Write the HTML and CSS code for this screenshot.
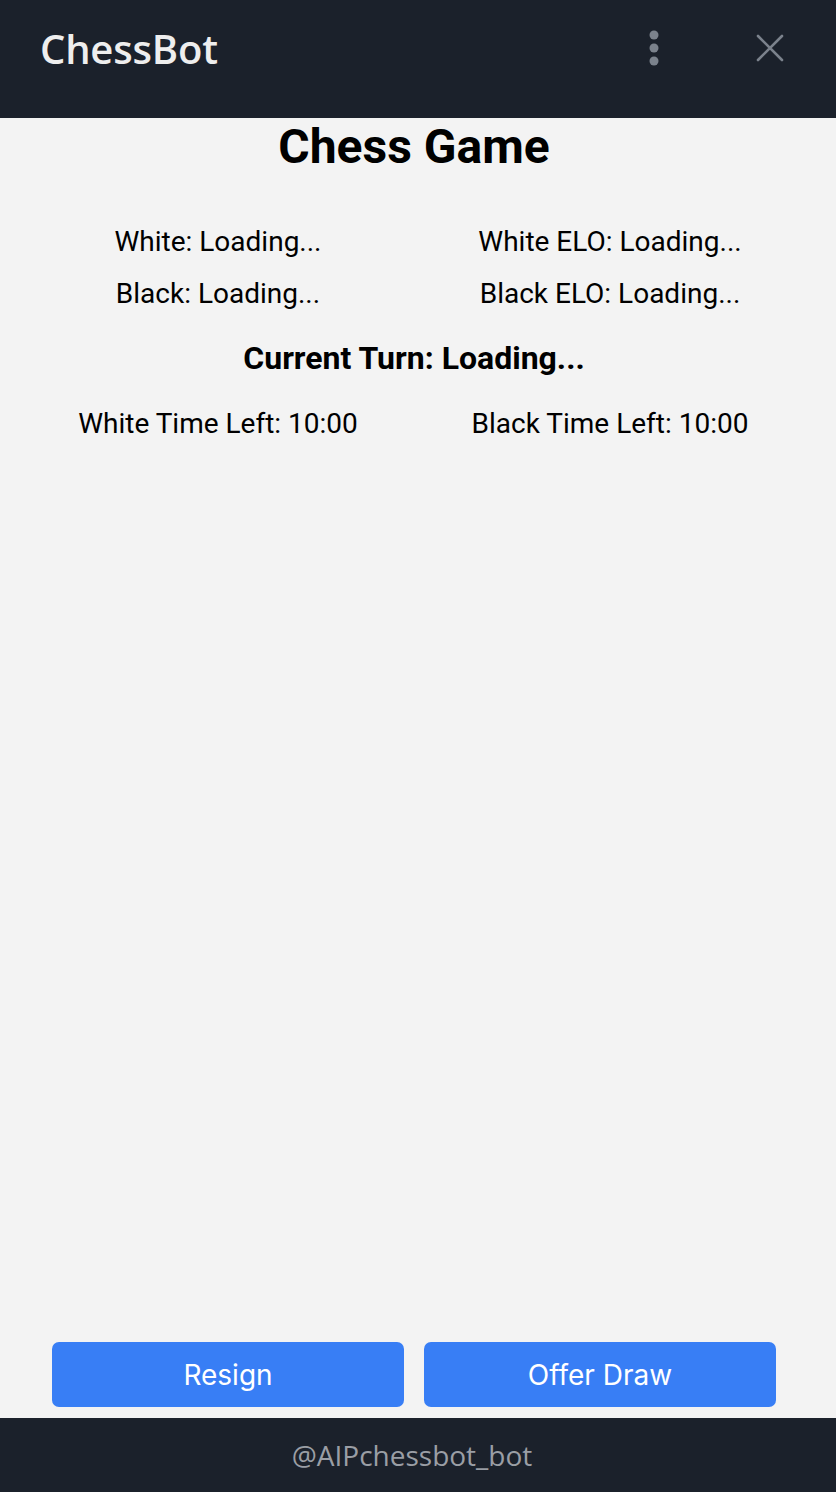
FILE: index.html
```html
<!DOCTYPE html>
<html>
<head>
<meta charset="utf-8">
<link rel="stylesheet" href="styles.css">
</head>
<body>
<div class="app">
  <header class="topbar">
    <div class="brand">ChessBot</div>
    <div class="actions">
      <svg class="icon-dots" width="12" height="36" viewBox="0 0 12 36"><circle cx="6" cy="5" r="4.5" fill="#7b828c"/><circle cx="6" cy="18" r="4.5" fill="#7b828c"/><circle cx="6" cy="31" r="4.5" fill="#7b828c"/></svg>
      <svg class="icon-close" width="28" height="28" viewBox="0 0 28 28"><path d="M2 2 L26 26 M26 2 L2 26" stroke="#7b828c" stroke-width="2.6" stroke-linecap="round" fill="none"/></svg>
    </div>
  </header>
  <main class="content">
    <h1 class="title">Chess Game</h1>
    <div class="grid">
      <div class="cell">White: Loading...</div>
      <div class="cell">White ELO: Loading...</div>
      <div class="cell">Black: Loading...</div>
      <div class="cell">Black ELO: Loading...</div>
    </div>
    <div class="turn">Current Turn: Loading...</div>
    <div class="grid times">
      <div class="cell">White Time Left: 10:00</div>
      <div class="cell">Black Time Left: 10:00</div>
    </div>
    <div class="spacer"></div>
    <div class="buttons">
      <button class="btn">Resign</button>
      <button class="btn">Offer Draw</button>
    </div>
  </main>
  <footer class="bottombar">@AIPchessbot_bot</footer>
</div>
</body>
</html>
```

FILE: styles.css
```css
* { box-sizing: border-box; }
html, body { margin: 0; padding: 0; }
body { background: #f3f3f3; font-family: Roboto, "Liberation Sans", sans-serif; color: #000; }
.app { display: flex; flex-direction: column; height: 1492px; }
.topbar {
  height: 118px; flex: none; background: #1b212b;
  display: flex; align-items: flex-start; justify-content: space-between;
  padding: 22px 52px 0 40px;
}
.brand {
  font-family: "Open Sans", sans-serif; font-weight: 600; font-size: 40px;
  color: #eeeeee; line-height: 54px; letter-spacing: -0.2px;
}
.actions { display: flex; align-items: center; gap: 96px; height: 54px; }
.icon-dots { display: block; margin-top: -2px; }
.icon-close { display: block; margin-top: -2px; }
.content {
  flex: 1; display: flex; flex-direction: column;
  padding: 0 30px 11px 22px;
}
.title {
  margin: 0 0 40px; text-align: center; font-size: 48px; font-weight: 700;
  line-height: 58px;
}
.grid { display: grid; grid-template-columns: 1fr 1fr; }
.cell { text-align: center; font-size: 28px; line-height: 52px; }
.turn { margin-top: 12px; text-align: center; font-weight: 700; font-size: 32px; line-height: 52px; }
.times { margin-top: 14px; }
.spacer { flex: 1; }
.buttons { display: grid; grid-template-columns: 1fr 1fr; gap: 20px; padding: 0 30px; }
.btn {
  height: 65px; border: none; border-radius: 7px; background: #387ef5;
  color: #fff; font-family: Inter, "Noto Sans", sans-serif; font-size: 28px; font-weight: 400;
}
.bottombar {
  height: 74px; flex: none; background: #1b212b; color: #9a9ea5;
  font-family: "Open Sans", sans-serif; font-size: 28px;
  display: flex; align-items: center; justify-content: center; padding-right: 12px;
}
```
